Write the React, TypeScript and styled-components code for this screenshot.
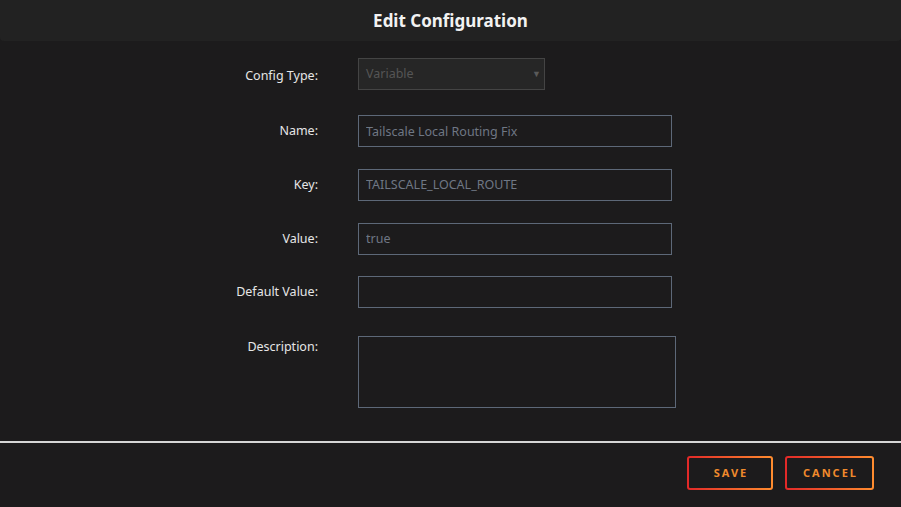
import React from "react";
import styled, { createGlobalStyle } from "styled-components";

const GlobalStyle = createGlobalStyle`
  html, body {
    margin: 0;
    padding: 0;
    background: #1c1b1c;
  }
  body {
    font-family: "Noto Sans", "Open Sans", sans-serif;
    color: #e4e4e4;
  }
`;

const Page = styled.div`
  width: 901px;
  height: 507px;
  background: #1c1b1c;
  display: flex;
  flex-direction: column;
  overflow: hidden;
`;

const Header = styled.div`
  height: 41px;
  background: #222222;
  border-radius: 0 0 4px 4px;
  display: flex;
  align-items: center;
  justify-content: center;
  font-size: 17px;
  font-weight: 700;
  color: #f2f2f2;
`;

const Form = styled.div`
  display: grid;
  grid-template-columns: 318px auto;
  column-gap: 40px;
  row-gap: 21.7px;
  padding-top: 16.5px;
  align-items: center;
  justify-content: start;
`;

const Label = styled.label<{ top?: boolean }>`
  text-align: right;
  font-size: 12.5px;
  color: #e6e6e6;
  align-self: ${(p) => (p.top ? "start" : "center")};
  margin-top: ${(p) => (p.top ? "7px" : "0")};
  line-height: 20px;
`;

const SelectBox = styled.div`
  width: 187px;
  height: 32px;
  box-sizing: border-box;
  border: 1px solid #444444;
  background: #262626;
  display: flex;
  align-items: center;
  justify-content: space-between;
  padding: 0 3px 0 7px;
  font-size: 12.5px;
  color: #555555;
  margin-bottom: 4px;
`;

const Caret = styled.span`
  font-size: 9px;
  color: #5a5a5a;
`;

const TextInput = styled.input`
  width: 314px;
  height: 32px;
  box-sizing: border-box;
  border: 1px solid #5d6878;
  background: transparent;
  color: #6f7784;
  font-family: "Noto Sans", "Open Sans", sans-serif;
  font-size: 12.5px;
  padding: 0 7px;
  outline: none;
`;

const TextArea = styled.textarea`
  width: 318px;
  height: 72px;
  box-sizing: border-box;
  border: 1px solid #5d6878;
  background: transparent;
  color: #6f7784;
  font-family: "Noto Sans", "Open Sans", sans-serif;
  font-size: 12.5px;
  resize: none;
  outline: none;
  margin-top: 6px;
  display: block;
`;

const Divider = styled.div`
  margin-top: 33px;
  height: 2px;
  background: #d6d6d6;
`;

const Footer = styled.div`
  display: flex;
  justify-content: flex-end;
  gap: 12px;
  padding: 13px 27px 0 0;
`;

const Button = styled.button<{ w: number }>`
  width: ${(p) => p.w}px;
  height: 34px;
  box-sizing: border-box;
  border: 2px solid transparent;
  border-radius: 3px;
  background:
    linear-gradient(#1c1b1c, #1c1b1c) padding-box,
    linear-gradient(90deg, #e22828, #ff8d2f) border-box;
  font-family: "Noto Sans", "Open Sans", sans-serif;
  font-size: 11px;
  font-weight: 700;
  letter-spacing: 2px;
  color: #f08a2c;
  cursor: pointer;
  padding: 0 0 1px 2px;
`;

export default function App() {
  return (
    <Page>
      <GlobalStyle />
      <Header>Edit Configuration</Header>
      <Form>
        <Label>Config Type:</Label>
        <SelectBox>
          Variable
          <Caret>▼</Caret>
        </SelectBox>

        <Label>Name:</Label>
        <TextInput defaultValue="Tailscale Local Routing Fix" />

        <Label>Key:</Label>
        <TextInput defaultValue="TAILSCALE_LOCAL_ROUTE" />

        <Label>Value:</Label>
        <TextInput defaultValue="true" />

        <Label>Default Value:</Label>
        <TextInput defaultValue="" />

        <Label top>Description:</Label>
        <TextArea />
      </Form>
      <Divider />
      <Footer>
        <Button w={86}>SAVE</Button>
        <Button w={89}>CANCEL</Button>
      </Footer>
    </Page>
  );
}
